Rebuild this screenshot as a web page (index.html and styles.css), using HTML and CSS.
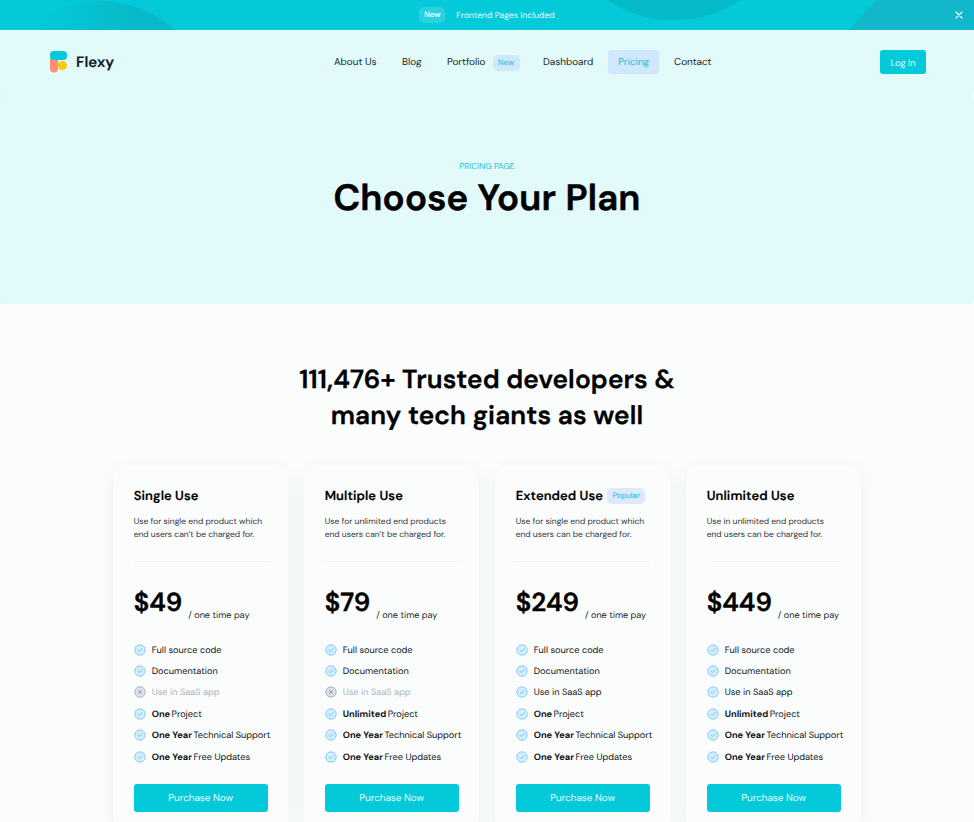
FILE: index.html
```html
<!DOCTYPE html>
<html lang="en">
<head>
<meta charset="utf-8">
<title>Flexy Pricing</title>
<link rel="stylesheet" href="styles.css">
</head>
<body>
<svg class="defs" width="0" height="0" aria-hidden="true">
  <symbol id="check" viewBox="0 0 12 12"><circle cx="6" cy="6" r="5.2" fill="#d3effe" stroke="#7cc6f2" stroke-width=".9"/><path d="M3.9 6.2 5.4 7.6 8.2 4.7" fill="none" stroke="#55b9e6" stroke-width=".8" stroke-linecap="round" stroke-linejoin="round"/></symbol>
  <symbol id="cross" viewBox="0 0 12 12"><circle cx="6" cy="6" r="5.2" fill="#dce1ea" stroke="#a4adbd" stroke-width=".9"/><path d="M4.400 4.400l3.200 3.200M7.600 4.400l-3.200 3.200" fill="none" stroke="#8c96a8" stroke-width=".9" stroke-linecap="round"/></symbol>
</svg>
<div class="banner">
  <svg class="banner-art" width="974" height="30" viewBox="0 0 974 30" aria-hidden="true">
    <defs><linearGradient id="fade" x1="40" x2="140" y1="0" y2="0" gradientUnits="userSpaceOnUse"><stop stop-color="#06b9c8" stop-opacity="0"/><stop offset="1" stop-color="#06b9c8"/></linearGradient></defs>
    <circle cx="100" cy="112" r="111" fill="url(#fade)"/>
    <circle cx="674" cy="-102" r="122" fill="#04b9c8"/>
    <circle cx="962" cy="104" r="134" fill="#13b7cc"/>
  </svg>
  <span class="banner-tag">New</span>
  <span class="banner-text">Frontend Pages Included</span>
  <svg class="close" width="8" height="8" viewBox="0 0 8 8"><path d="M1 1l6 6M7 1L1 7" stroke="#fff" stroke-width="1.1" stroke-linecap="round"/></svg>
</div>
<header class="header">
  <a class="brand">
    <svg width="18" height="22" viewBox="0 0 18 22"><path d="M0 8h8v9.500a4 4 0 0 1-8 0z" fill="#fa9173"/><circle cx="12.400" cy="14.500" r="4.600" fill="#fdc90f"/><rect width="17" height="9" rx="4" fill="#05c8d6"/></svg>
    <span class="brand-name">Flexy</span>
  </a>
  <nav class="nav">
    <a class="nav-about">About Us</a>
    <a class="nav-blog">Blog</a>
    <a class="nav-portfolio">Portfolio<span class="pill">New</span></a>
    <a class="nav-dashboard">Dashboard</a>
    <a class="nav-pricing active">Pricing</a>
    <a class="nav-contact">Contact</a>
  </nav>
  <a class="login">Log In</a>
</header>
<section class="hero">
  <p class="eyebrow">PRICING PAGE</p>
  <h1>Choose Your Plan</h1>
</section>
<main>
  <h2>111,476+ Trusted developers &amp;<br>many tech giants as well</h2>
  <div class="plans">
    <article class="card">
      <h3>Single Use</h3>
      <p class="desc">Use for single end product which<br>end users can’t be charged for.</p>
      <div class="price"><strong>$49</strong><span>/ one time pay</span></div>
      <ul>
        <li><svg><use href="#check"/></svg>Full source code</li>
        <li><svg><use href="#check"/></svg>Documentation</li>
        <li class="off"><svg><use href="#cross"/></svg>Use in SaaS app</li>
        <li><svg><use href="#check"/></svg><b>One</b>Project</li>
        <li><svg><use href="#check"/></svg><b>One Year</b>Technical Support</li>
        <li><svg><use href="#check"/></svg><b>One Year</b>Free Updates</li>
      </ul>
      <a class="buy">Purchase Now</a>
    </article>
    <article class="card">
      <h3>Multiple Use</h3>
      <p class="desc">Use for unlimited end products<br>end users can’t be charged for.</p>
      <div class="price"><strong>$79</strong><span>/ one time pay</span></div>
      <ul>
        <li><svg><use href="#check"/></svg>Full source code</li>
        <li><svg><use href="#check"/></svg>Documentation</li>
        <li class="off"><svg><use href="#cross"/></svg>Use in SaaS app</li>
        <li><svg><use href="#check"/></svg><b>Unlimited</b>Project</li>
        <li><svg><use href="#check"/></svg><b>One Year</b>Technical Support</li>
        <li><svg><use href="#check"/></svg><b>One Year</b>Free Updates</li>
      </ul>
      <a class="buy">Purchase Now</a>
    </article>
    <article class="card">
      <h3>Extended Use<span class="pill popular">Popular</span></h3>
      <p class="desc">Use for single end product which<br>end users can be charged for.</p>
      <div class="price"><strong>$249</strong><span>/ one time pay</span></div>
      <ul>
        <li><svg><use href="#check"/></svg>Full source code</li>
        <li><svg><use href="#check"/></svg>Documentation</li>
        <li><svg><use href="#check"/></svg>Use in SaaS app</li>
        <li><svg><use href="#check"/></svg><b>One</b>Project</li>
        <li><svg><use href="#check"/></svg><b>One Year</b>Technical Support</li>
        <li><svg><use href="#check"/></svg><b>One Year</b>Free Updates</li>
      </ul>
      <a class="buy">Purchase Now</a>
    </article>
    <article class="card">
      <h3>Unlimited Use</h3>
      <p class="desc">Use in unlimited end products<br>end users can be charged for.</p>
      <div class="price"><strong>$449</strong><span>/ one time pay</span></div>
      <ul>
        <li><svg><use href="#check"/></svg>Full source code</li>
        <li><svg><use href="#check"/></svg>Documentation</li>
        <li><svg><use href="#check"/></svg>Use in SaaS app</li>
        <li><svg><use href="#check"/></svg><b>Unlimited</b>Project</li>
        <li><svg><use href="#check"/></svg><b>One Year</b>Technical Support</li>
        <li><svg><use href="#check"/></svg><b>One Year</b>Free Updates</li>
      </ul>
      <a class="buy">Purchase Now</a>
    </article>
  </div>
</main>
</body>
</html>
```
FILE: styles.css
```css
* { box-sizing: border-box; margin: 0; padding: 0; }
body {
  width: 974px; height: 822px; overflow: hidden;
  background: #fafdfc; color: #1a1f25;
  font-family: "DM Sans", Inter, "Liberation Sans", sans-serif;
  font-optical-sizing: none; text-rendering: geometricPrecision;
  font-size: 9px; white-space: nowrap;
}
.defs { position: absolute; }
.banner {
  position: relative; height: 30px; background: #03c9d9; color: #eafcff;
  display: flex; align-items: center; justify-content: center; gap: 11px;
}
.banner-art { position: absolute; left: 0; top: 0; }
.banner-tag {
  position: relative; width: 26px; height: 16px; border-radius: 5px;
  background: #2bd1df; font-size: 7.8px; font-weight: 600; line-height: 17px; text-align: center;
}
.banner-text { position: relative; font-size: 8.6px; line-height: 30px; }
.close { position: absolute; right: 11px; top: 11px; }
.header {
  height: 66px; background: #e3fafb; border-radius: 0 0 4px 4px;
  padding: 0 48px 2px 50px; display: grid; grid-template-columns: 274px 1fr 46px; align-items: center;
}
.brand { display: flex; align-items: center; gap: 8px; height: 24px; }
.brand-name { font-size: 15px; font-weight: 600; letter-spacing: .15px; -webkit-text-stroke: .2px; color: #0d1a33; line-height: 24px; }
.nav { display: flex; align-items: center; }
.nav a {
  height: 24px; line-height: 22px; border-radius: 3px; padding: 2px 0 0 10px;
  font-size: 9.95px; display: flex; align-items: center;
}
.nav-about { width: 68px; }
.nav-blog { width: 45px; }
.nav-portfolio { width: 96px; gap: 7px; }
.nav-dashboard { width: 75px; }
.nav-pricing { width: 51px; margin-right: 5px; }
.nav .active { background: #cfe8fb; color: #10bfd8; }
.pill {
  height: 16px; width: 27px; border-radius: 5px; background: #cfe8fb; color: #16bdd6;
  font-size: 7.9px; font-weight: 400; line-height: 16px; text-align: center;
}
.login {
  height: 24px; border-radius: 3px; background: #03c9d9; color: #e9fcfe;
  line-height: 26px; text-align: center; font-size: 9.300px;
}
.hero {
  height: 208px; background: #e3fafb; border-radius: 4px; text-align: center; padding-top: 65px;
}
.eyebrow { font-size: 8.5px; line-height: 12px; color: #25c5d6; }
h1 {
  font-size: 36.5px; line-height: 48px; font-weight: 600; color: #000; margin-top: 2px;
  letter-spacing: .22px; -webkit-text-stroke: .55px;
}
h2 {
  margin-top: 58px; text-align: center; font-size: 26.2px; line-height: 36px;
  font-weight: 600; color: #000; letter-spacing: .14px; -webkit-text-stroke: .35px;
}
.plans { margin: 31px 113px 0; display: grid; grid-template-columns: repeat(4, 175px); gap: 16px; }
.card {
  height: 367px; border-radius: 14px; background: #fafdfc; padding: 20px 20.7px;
  box-shadow: 0 4px 20px rgba(30, 40, 70, .055);
}
h3 {
  height: 21px; line-height: 21px; font-size: 13px; font-weight: 600; color: #000;
  display: flex; align-items: center; padding-top: 1px; letter-spacing: .08px; -webkit-text-stroke: .15px;
}
.popular { width: 38px; margin-left: 4px; background: #deeafc; letter-spacing: 0; -webkit-text-stroke: 0; }
.desc {
  margin-top: 9px; padding-bottom: 20px; border-bottom: 1px solid #eff2f3;
  font-size: 8.45px; line-height: 13px; width: 134px; color: #30343a;
}
.price { height: 40px; margin-top: 21px; display: flex; align-items: flex-start; gap: 6px; }
.price strong { font-size: 26px; font-weight: 600; line-height: 40px; color: #000; -webkit-text-stroke: .35px; }
.price span { font-size: 9.1px; line-height: 14px; margin-top: 25px; }
ul { list-style: none; margin-top: 16px; }
li { height: 21.4px; display: flex; align-items: center; font-size: 9.2px; color: #0d1014; }
li svg { width: 12px; height: 12px; flex: none; margin-left: .5px; margin-right: 5.5px; }
li b { font-weight: 700; margin-right: 1.500px; }
.off { color: #a9b1bd; }
.buy {
  display: block; margin-top: 17px; width: 134px; height: 28px; border-radius: 3px; background: #03c9d9;
  color: #e9fcfe; text-align: center; font-size: 9.9px; line-height: 29px;
}
```
